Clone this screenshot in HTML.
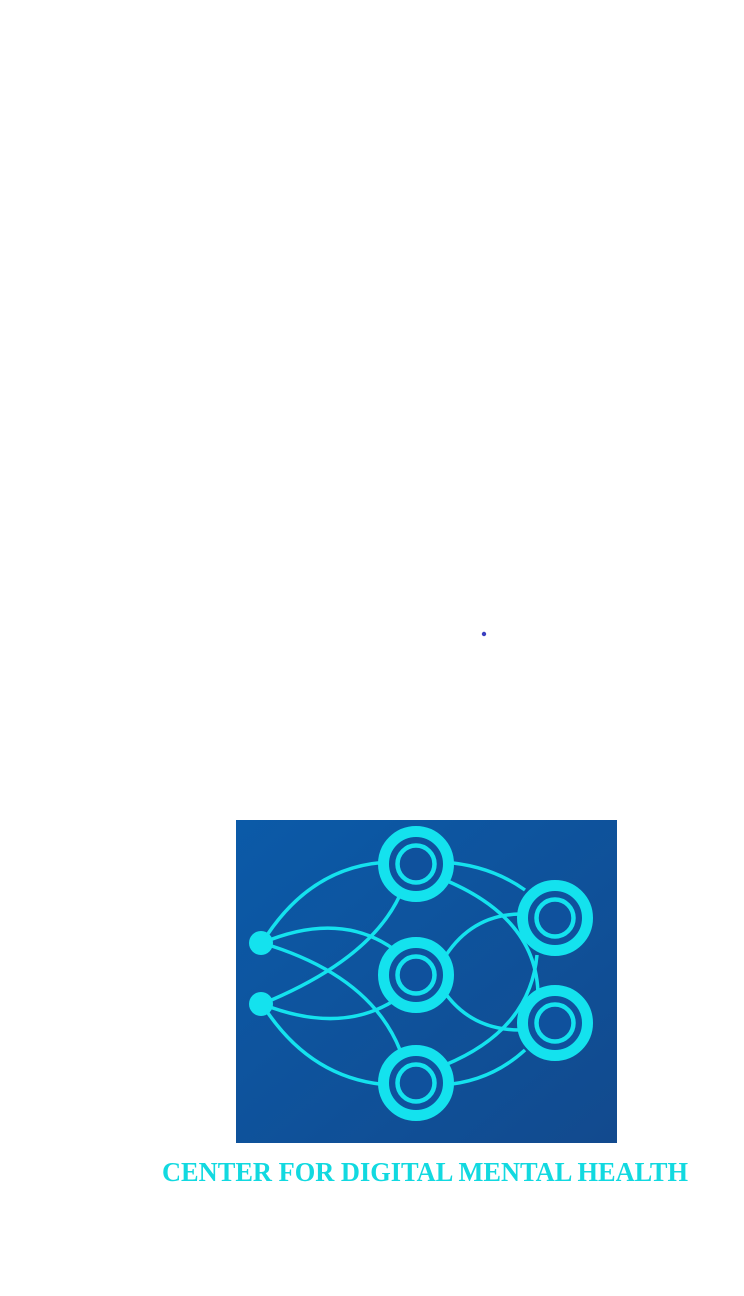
<!DOCTYPE html>
<html><head><meta charset="utf-8"><style>
html,body{margin:0;padding:0;background:#fff;width:744px;height:1296px;overflow:hidden}
svg{position:absolute;left:0;top:0}
</style></head><body>
<svg width="744" height="1296" viewBox="0 0 744 1296">
<defs><linearGradient id="g" x1="0" y1="0" x2="1" y2="1">
<stop offset="0" stop-color="#0b5aa8"/><stop offset="1" stop-color="#124a8e"/></linearGradient></defs>
<circle cx="484" cy="634" r="2.2" fill="#3a3fc0"/>
<rect x="236" y="820" width="381" height="323" fill="url(#g)"/>
<g fill="none" stroke="#14e2ee" stroke-width="3.5">
<path d="M262 943 Q310 865 390 862"/>
<path d="M262 1004 Q310 1080 390 1085"/>
<path d="M262 943 Q340 910 395 950"/>
<path d="M262 1004 Q340 1035 395 1000"/>
<path d="M262 943 Q370 975 400 1050"/>
<path d="M262 1004 Q370 960 400 895"/>
<path d="M442 862 Q490 865 525 890"/>
<path d="M442 1085 Q490 1082 525 1050"/>
<path d="M445 880 Q540 920 538 1000"/>
<path d="M445 1065 Q530 1030 537 955"/>
<path d="M443 960 Q470 915 520 914"/>
<path d="M443 990 Q470 1030 520 1030"/>
</g>
<g fill="#0f519d" stroke="#14e2ee">
<circle cx="416" cy="864" r="32.5" stroke-width="11"/>
<circle cx="416" cy="975" r="32.5" stroke-width="11"/>
<circle cx="416" cy="1083" r="32.5" stroke-width="11"/>
<circle cx="555" cy="918" r="32.5" stroke-width="11"/>
<circle cx="555" cy="1023" r="32.5" stroke-width="11"/>
</g>
<g fill="none" stroke="#14e2ee" stroke-width="4.5">
<circle cx="416" cy="864" r="18.5"/>
<circle cx="416" cy="975" r="18.5"/>
<circle cx="416" cy="1083" r="18.5"/>
<circle cx="555" cy="918" r="18.5"/>
<circle cx="555" cy="1023" r="18.5"/>
</g>
<circle cx="261" cy="943" r="12" fill="#14e2ee"/>
<circle cx="261" cy="1004" r="12" fill="#14e2ee"/>
<text x="162" y="1181" font-family="Liberation Serif, serif" font-weight="bold" font-size="27" fill="#12d9e0" textLength="526" lengthAdjust="spacingAndGlyphs">CENTER FOR DIGITAL MENTAL HEALTH</text>
</svg>
</body></html>
